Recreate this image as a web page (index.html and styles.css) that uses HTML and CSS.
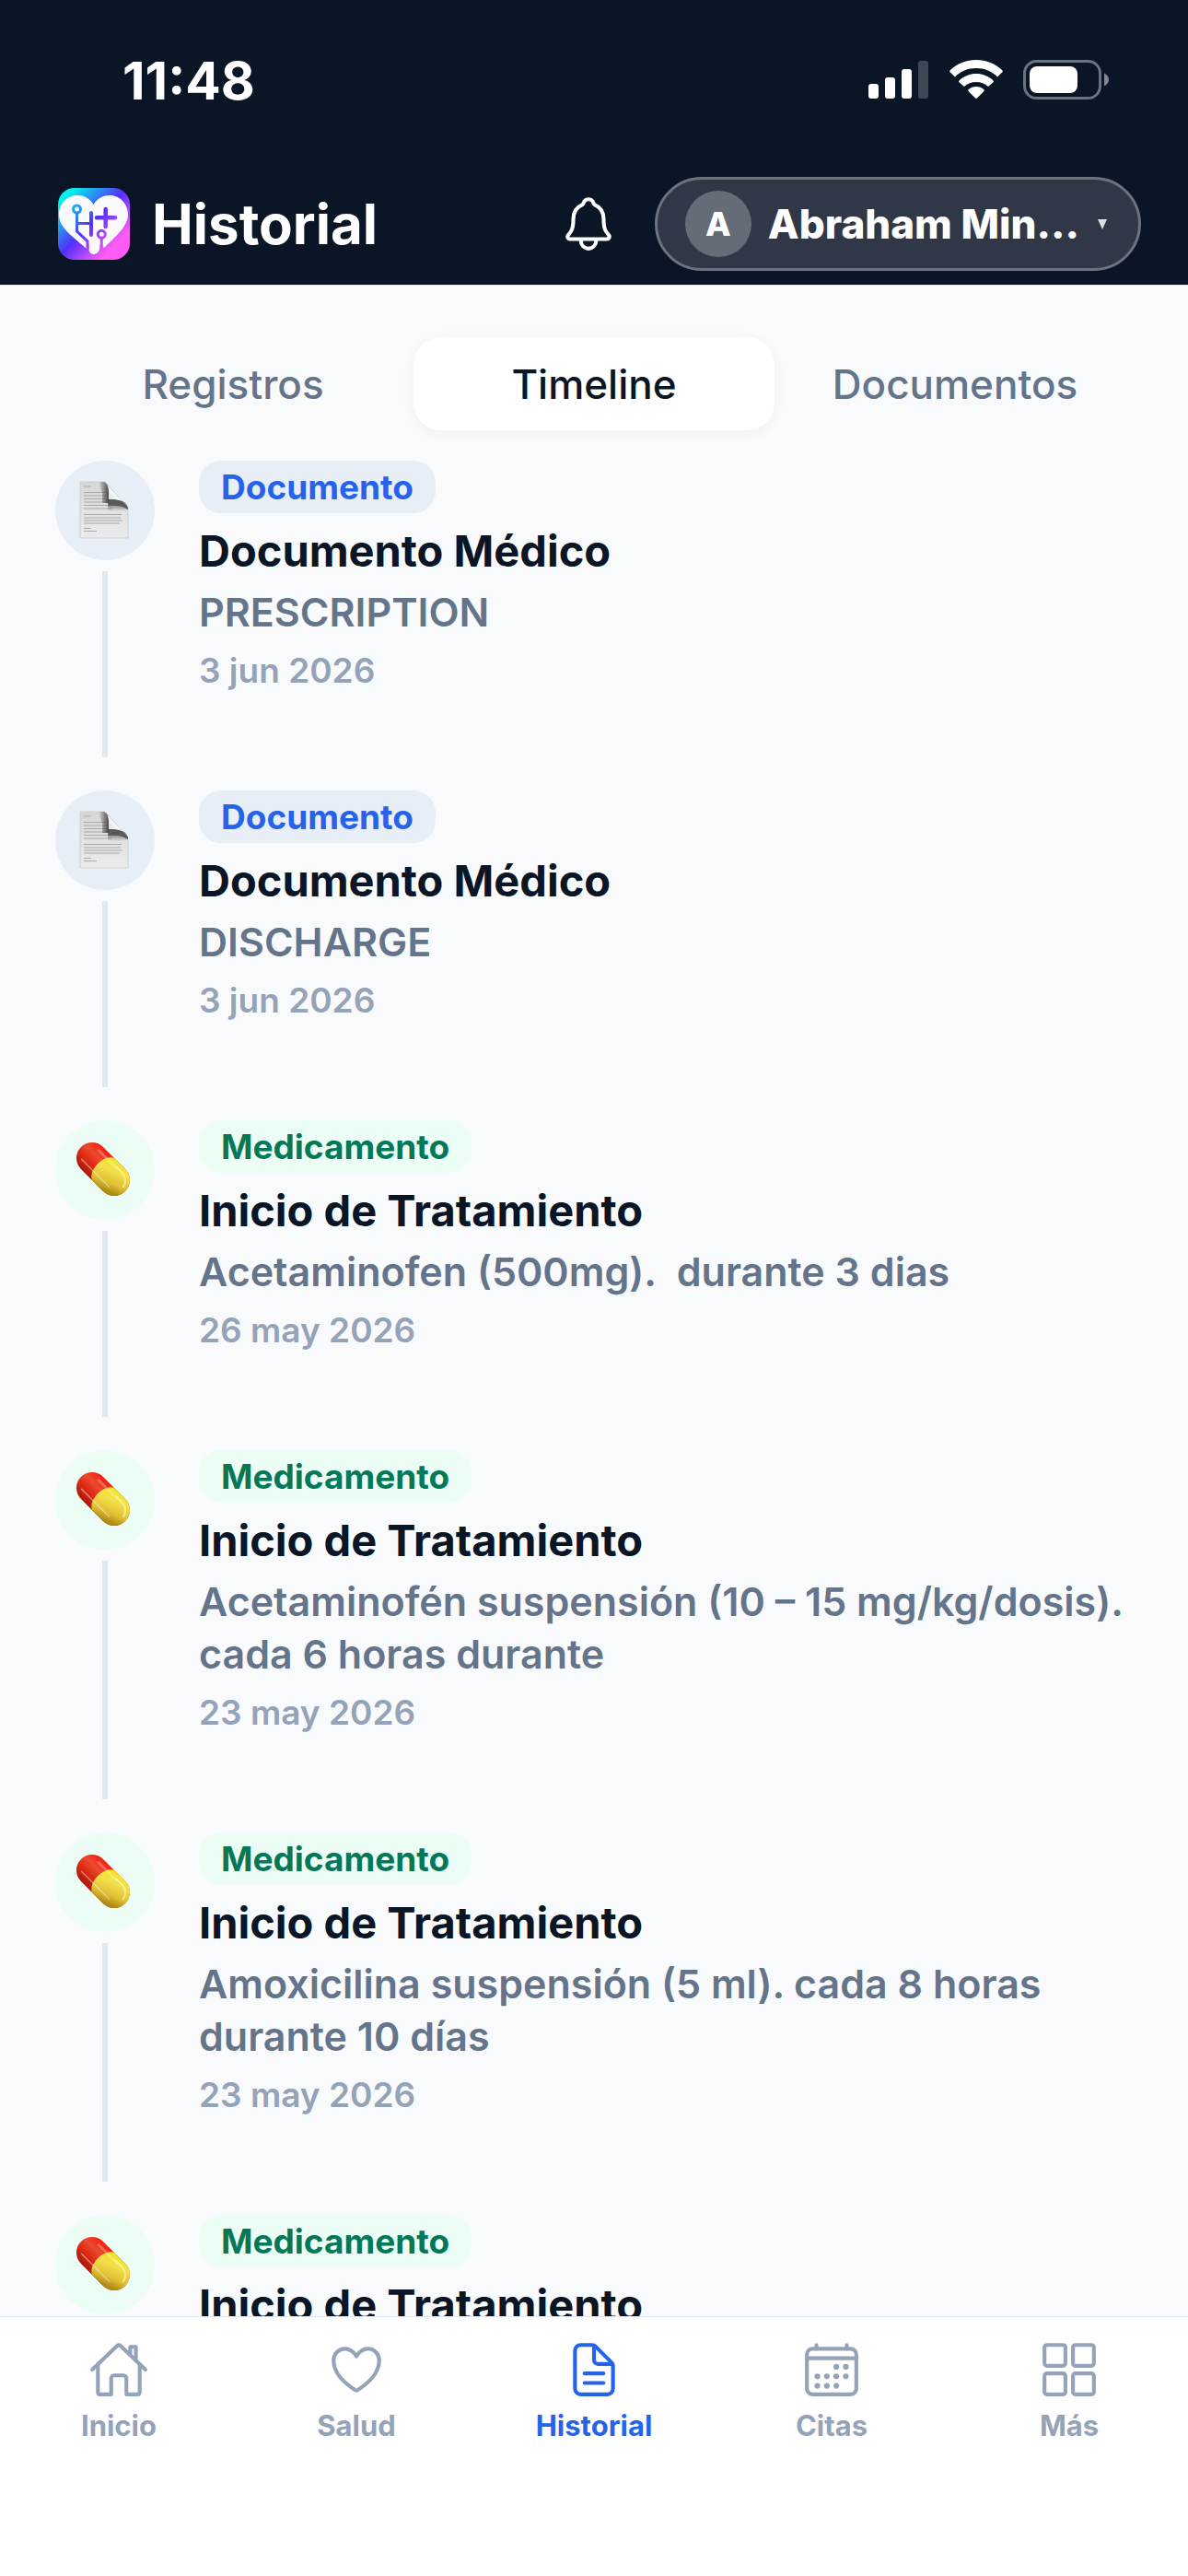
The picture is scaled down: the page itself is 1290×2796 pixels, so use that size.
FILE: index.html
```html
<!DOCTYPE html>
<html lang="es">
<head>
  <meta charset="UTF-8">
  <meta name="viewport" content="width=device-width, initial-scale=1.0">
  <title>Historial</title>
  <link rel="stylesheet" href="styles.css">
</head>
<body>
  <!-- shared icons -->
  <svg class="sprite" aria-hidden="true">
    <defs>
      <linearGradient id="pill-red" x1="0" y1="0" x2="0" y2="1">
        <stop offset="0" stop-color="#f5200c"/>
        <stop offset="0.35" stop-color="#ea4a30"/>
        <stop offset="0.65" stop-color="#dc2a12"/>
        <stop offset="1" stop-color="#a81a0c"/>
      </linearGradient>
      <linearGradient id="pill-yellow" x1="0" y1="0" x2="0.5" y2="1">
        <stop offset="0" stop-color="#f2e70e"/>
        <stop offset="0.4" stop-color="#f3e04c"/>
        <stop offset="0.75" stop-color="#e0c034"/>
        <stop offset="1" stop-color="#b08a14"/>
      </linearGradient>
      <linearGradient id="page-paper" x1="0" y1="0" x2="0" y2="1">
        <stop offset="0" stop-color="#d6d6d6"/>
        <stop offset="1" stop-color="#ececec"/>
      </linearGradient>
      <linearGradient id="page-curl" x1="0" y1="1" x2="1" y2="0">
        <stop offset="0.2" stop-color="#d4d5d6"/>
        <stop offset="0.5" stop-color="#fafbfb"/>
      </linearGradient>
      <linearGradient id="shade-down" x1="0" y1="0" x2="0" y2="1">
        <stop offset="0" stop-color="#3c3c3c"/>
        <stop offset="1" stop-color="#3c3c3c" stop-opacity="0"/>
      </linearGradient>
      <linearGradient id="shade-left" x1="1" y1="0" x2="0" y2="0">
        <stop offset="0" stop-color="#3c3c3c"/>
        <stop offset="1" stop-color="#3c3c3c" stop-opacity="0"/>
      </linearGradient>
    </defs>
    <symbol id="icon-pill" viewBox="0 0 108 108">
      <g transform="translate(52 53) rotate(45)">
        <rect x="-34" y="-17" width="68" height="34" rx="17" fill="url(#pill-red)"/>
        <path d="M0-17h17a17 17 0 0 1 0 34H0C-11 12-11-12 0-17z" fill="url(#pill-yellow)"/>
        <path d="M-18-11H10" stroke="#fff" stroke-opacity=".25" stroke-width="3" stroke-linecap="round"/>
        <path d="M-24 9H18" stroke="#fff" stroke-opacity=".4" stroke-width="1.5" stroke-linecap="round"/>
        <path d="M8-12h9a12 12 0 0 1 12 10" fill="none" stroke="#fff6a8" stroke-opacity=".7" stroke-width="2" stroke-linecap="round"/>
      </g>
    </symbol>
    <symbol id="icon-page" viewBox="0 0 108 108">
      <path d="M27 23h27L79 51v33H27z" fill="url(#page-paper)" stroke="#cfcfcf" stroke-width="1"/>
      <g stroke="#a9a9a9" stroke-width="1">
        <path d="M31 28h8M31 34.500h24M31 38h26M31 41.500h27M31 45h27M31 48.500h28M31 52h30M31 58.500h41M31 62h40M31 65h42M31 68h39M31 73.500h8M31 76.500h14"/>
      </g>
      <path d="M47 23h6c5 2 6 9 6 19v4H51V36z" fill="url(#shade-left)"/>
      <path d="M57 42c13 0 21 2 22 10v1l-4 2H57z" fill="url(#shade-down)"/>
      <path d="M53 23c6 4 5 11 5 19 12 0 18 2 21 9z" fill="url(#page-curl)"/>
      <path d="M58 42c12 0 18 2 21 9v2c-6-4-12-5-21-4z" fill="#5a5a5a"/>
    </symbol>
  </svg>

  <div class="app">
    <header class="header">
      <div class="status-bar">
        <span class="status-time">11:48</span>
        <div class="status-icons">
          <svg width="66" height="44" viewBox="0 0 66 44" fill="#fff">
            <rect x="0" y="26" width="11" height="16" rx="3"/>
            <rect x="18" y="19" width="11" height="23" rx="3"/>
            <rect x="36" y="10" width="11" height="32" rx="3"/>
            <rect x="54" y="1" width="11" height="41" rx="3" opacity=".22"/>
          </svg>
          <svg width="58" height="44" viewBox="0 0 58 44" fill="#fff">
            <path d="M29 0C40 0 50 4 57.200 11.300a1.500 1.500 0 0 1 0 2.200L52 18.500C46 12.300 38 9 29 9S12 12.300 6 18.500L.8 13.500a1.500 1.500 0 0 1 0-2.200C8 4 18 0 29 0z"/>
            <path d="M29 15c7 0 13.500 2.700 18.300 7.200a1.500 1.500 0 0 1 0 2.300L42 29c-3.600-3.200-8-5-13-5s-9.400 1.800-13 5l-5.300-4.500a1.500 1.500 0 0 1 0-2.300C15.500 17.700 22 15 29 15z"/>
            <path d="M29 29c3.200 0 6 1.100 8.200 3a1.500 1.500 0 0 1 0 2.200L30 41.600a1.500 1.500 0 0 1-2 0L20.800 34.200a1.500 1.500 0 0 1 0-2.200C23 30.100 25.800 29 29 29z"/>
          </svg>
          <svg width="94" height="44" viewBox="0 0 94 44">
            <rect x="1.500" y="1.500" width="82" height="40" rx="13" fill="none" stroke="#6c737d" stroke-width="3"/>
            <rect x="7" y="7" width="52" height="29" rx="8" fill="#fff"/>
            <path d="M88 14.500c3 1.500 5 4 5 7s-2 5.500-5 7z" fill="#84888f"/>
          </svg>
        </div>
      </div>

      <div class="title-bar">
        <svg class="logo" viewBox="0 0 78 78">
          <defs>
            <linearGradient id="brand" gradientUnits="userSpaceOnUse" x1="4" y1="4" x2="74" y2="74">
              <stop offset="0.06" stop-color="#00f6ec"/>
              <stop offset="0.48" stop-color="#5230fb"/>
              <stop offset="0.82" stop-color="#fc5cf5"/>
            </linearGradient>
          </defs>
          <rect width="78" height="78" rx="18" fill="url(#brand)"/>
          <path d="M38.500 18C34 11 28 8 21 8 9 8 1 18 1 29c0 14 15 24 30 37l2-6c1 3 0 6 1 9 2 4 7 4 10 0 2-2 1-6 2-9l4 5c11-11 26-23 26-36C76 18 68 8 56 8c-7 0-13 3-17.500 10z" fill="#fafafc"/>
          <g fill="none" stroke="url(#brand)" stroke-width="3">
            <circle cx="20.500" cy="23" r="4"/>
            <path d="M20.500 27v20L32 58v8M20.500 38.500H36"/>
            <path d="M36.010 27l-.02 24" stroke-width="4" stroke-linecap="round"/>
            <path d="M51.700 23l.01 19M42 32.300l20 .01" stroke-width="4.500" stroke-linecap="round"/>
            <circle cx="47.300" cy="50.300" r="4"/>
            <path d="M47.300 54.500l.01 11"/>
          </g>
        </svg>
        <h1 class="title">Historial</h1>
        <button class="bell" type="button" aria-label="Notificaciones">
          <svg class="icon" viewBox="0 0 512 512">
            <path d="M427.680 351.430C402 320 383.870 304 383.870 217.350 383.870 138 343.350 109.730 310 96c-4.430-1.820-8.600-6-9.950-10.550C294.200 65.540 277.800 48 256 48s-38.210 17.550-44 37.470c-1.350 4.600-5.520 8.710-9.950 10.530-33.390 13.750-73.870 41.920-73.870 121.350C128.130 304 110 320 84.320 351.430 73.680 364.450 83 384 101.610 384h308.880c18.510 0 27.770-19.610 17.190-32.570zM320 384v16a64 64 0 01-128 0v-16"/>
          </svg>
        </button>
        <button class="profile" type="button">
          <span class="avatar">A</span>
          <span class="profile-name">Abraham Min...</span>
          <svg class="caret" viewBox="0 0 10 12"><path d="M0 1h10L5 12z" fill="#dcdee1"/></svg>
        </button>
      </div>
    </header>

    <div class="tabs">
      <button class="tab" type="button">Registros</button>
      <button class="tab active" type="button">Timeline</button>
      <button class="tab" type="button">Documentos</button>
    </div>

    <main class="timeline">
      <article class="event document">
        <div class="rail">
          <svg class="marker"><use href="#icon-page"/></svg>
          <span class="line"></span>
        </div>
        <div class="event-body">
          <span class="badge">Documento</span>
          <h2>Documento Médico</h2>
          <p>PRESCRIPTION</p>
          <time>3 jun 2026</time>
        </div>
      </article>

      <article class="event document">
        <div class="rail">
          <svg class="marker"><use href="#icon-page"/></svg>
          <span class="line"></span>
        </div>
        <div class="event-body">
          <span class="badge">Documento</span>
          <h2>Documento Médico</h2>
          <p>DISCHARGE</p>
          <time>3 jun 2026</time>
        </div>
      </article>

      <article class="event medication">
        <div class="rail">
          <svg class="marker"><use href="#icon-pill"/></svg>
          <span class="line"></span>
        </div>
        <div class="event-body">
          <span class="badge">Medicamento</span>
          <h2>Inicio de Tratamiento</h2>
          <p>Acetaminofen (500mg).&nbsp; durante 3 dias</p>
          <time>26 may 2026</time>
        </div>
      </article>

      <article class="event medication">
        <div class="rail">
          <svg class="marker"><use href="#icon-pill"/></svg>
          <span class="line"></span>
        </div>
        <div class="event-body">
          <span class="badge">Medicamento</span>
          <h2>Inicio de Tratamiento</h2>
          <p>Acetaminofén suspensión (10 – 15 mg/kg/dosis). cada 6 horas durante</p>
          <time>23 may 2026</time>
        </div>
      </article>

      <article class="event medication">
        <div class="rail">
          <svg class="marker"><use href="#icon-pill"/></svg>
          <span class="line"></span>
        </div>
        <div class="event-body">
          <span class="badge">Medicamento</span>
          <h2>Inicio de Tratamiento</h2>
          <p>Amoxicilina suspensión (5 ml). cada 8 horas durante 10 días</p>
          <time>23 may 2026</time>
        </div>
      </article>

      <article class="event medication">
        <div class="rail">
          <svg class="marker"><use href="#icon-pill"/></svg>
        </div>
        <div class="event-body">
          <span class="badge">Medicamento</span>
          <h2>Inicio de Tratamiento</h2>
        </div>
      </article>
    </main>

    <nav class="bottom-nav">
      <a href="#inicio">
        <svg class="icon" viewBox="0 0 512 512">
          <path d="M80 212v236a16 16 0 0016 16h96V328a24 24 0 0124-24h80a24 24 0 0124 24v136h96a16 16 0 0016-16V212"/>
          <path d="M480 256L266.890 52c-5-5.280-16.690-5.340-21.780 0L32 256M400 179V64h-48v69"/>
        </svg>
        Inicio
      </a>
      <a href="#salud">
        <svg class="icon" viewBox="0 0 512 512">
          <path d="M352.920 80C288 80 256 144 256 144s-32-64-96.920-64c-52.760 0-94.540 44.140-95.080 96.810-1.100 109.330 86.730 187.080 183 252.420a16 16 0 0018 0c96.260-65.340 184.090-143.090 183-252.420-.54-52.670-42.320-96.810-95.080-96.810z"/>
        </svg>
        Salud
      </a>
      <a class="active" href="#historial">
        <svg class="icon" viewBox="0 0 512 512">
          <path d="M416 221.250V416a48 48 0 01-48 48H144a48 48 0 01-48-48V96a48 48 0 0148-48h98.750a32 32 0 0122.620 9.370l141.260 141.260a32 32 0 019.370 22.620z"/>
          <path d="M256 56v120a32 32 0 0032 32h120M176 288h160M176 368h160"/>
        </svg>
        Historial
      </a>
      <a href="#citas">
        <svg class="icon" viewBox="0 0 512 512">
          <rect x="48" y="80" width="416" height="384" rx="48"/>
          <path d="M128 48v32M384 48v32M464 160H48"/>
          <g fill="currentColor" stroke="none">
            <circle cx="296" cy="232" r="24"/>
            <circle cx="376" cy="232" r="24"/>
            <circle cx="136" cy="312" r="24"/>
            <circle cx="216" cy="312" r="24"/>
            <circle cx="296" cy="312" r="24"/>
            <circle cx="376" cy="312" r="24"/>
            <circle cx="136" cy="392" r="24"/>
            <circle cx="216" cy="392" r="24"/>
            <circle cx="296" cy="392" r="24"/>
          </g>
        </svg>
        Citas
      </a>
      <a href="#mas">
        <svg class="icon" viewBox="0 0 512 512">
          <rect x="48" y="48" width="176" height="176" rx="20"/>
          <rect x="288" y="48" width="176" height="176" rx="20"/>
          <rect x="48" y="288" width="176" height="176" rx="20"/>
          <rect x="288" y="288" width="176" height="176" rx="20"/>
        </svg>
        Más
      </a>
    </nav>
  </div>
</body>
</html>
```

FILE: styles.css
```css
* {
  box-sizing: border-box;
}

body {
  margin: 0;
  font-family: 'Inter', 'Liberation Sans', sans-serif;
  background-color: #f9fafc;
  color: #0a1526;
}

h1, h2, p {
  margin: 0;
}

button {
  font-family: inherit;
  border: none;
  background: none;
  padding: 0;
  cursor: pointer;
}

svg {
  display: block;
  flex-shrink: 0;
}

.sprite {
  position: absolute;
  width: 0;
  height: 0;
}

.app {
  height: 100vh;
  display: flex;
  flex-direction: column;
}

.icon {
  width: 66px;
  height: 66px;
  fill: none;
  stroke: currentColor;
  stroke-width: 32;
  stroke-linecap: round;
  stroke-linejoin: round;
}

/* header */
.header {
  background-color: #0a1526;
  color: #fff;
  border-bottom: 1px solid #e2e8f0;
}

.status-bar {
  display: flex;
  justify-content: space-between;
  align-items: center;
  height: 174px;
  padding: 0 85px 0 133px;
  margin-bottom: 18px;
}

.status-time {
  font-size: 57px;
  font-weight: 700;
}

.status-icons {
  display: flex;
  gap: 22px;
}

.title-bar {
  display: flex;
  align-items: center;
  padding: 0 51px 15px 63px;
}

.logo {
  width: 78px;
  height: 78px;
  margin-right: 24px;
}

.title {
  flex: 1;
  font-size: 60px;
  font-weight: 700;
}

.bell {
  color: #fff;
  margin-right: 39px;
}

.profile {
  display: flex;
  align-items: center;
  height: 102px;
  padding: 0 34px 0 30px;
  border: 3px solid #6c737d;
  border-radius: 51px;
  background-color: #303848;
  color: #fff;
}

.avatar {
  width: 72px;
  height: 72px;
  line-height: 72px;
  border-radius: 50%;
  background-color: #656b77;
  font-size: 36px;
  font-weight: 800;
  margin-right: 18px;
}

.profile-name {
  font-size: 44px;
  font-weight: 800;
  margin-right: 20px;
}

.caret {
  width: 10px;
  height: 12px;
}

/* tabs */
.tabs {
  display: flex;
  padding: 56px 57px 33px;
}

.tab {
  flex: 1;
  height: 101px;
  border-radius: 30px;
  color: #64748b;
  font-size: 44px;
  font-weight: 500;
}

.tab.active {
  background-color: #fff;
  color: #0a1526;
  box-shadow: 0 3px 18px rgba(10, 21, 38, 0.04);
}

/* timeline */
.timeline {
  flex: 1;
  min-height: 0;
  overflow: hidden;
  padding: 0 60px;
}

.event {
  display: flex;
  gap: 48px;
  padding-bottom: 36px;
}

.rail {
  width: 108px;
  display: flex;
  flex-direction: column;
  align-items: center;
}

.marker {
  width: 108px;
  height: 108px;
  border-radius: 50%;
}

.line {
  flex: 1;
  width: 6px;
  margin-top: 12px;
  background-color: #e2e8f0;
}

.event-body {
  flex: 1;
  display: flex;
  flex-direction: column;
  align-items: flex-start;
  padding-bottom: 72px;
}

.badge {
  padding: 6px 24px;
  border-radius: 24px;
  font-size: 37px;
  line-height: 45px;
  font-weight: 700;
}

.document .marker,
.document .badge {
  background-color: #e8eef6;
}

.document .badge {
  color: #2563eb;
}

.medication .marker,
.medication .badge {
  background-color: #ecfdf5;
}

.medication .badge {
  color: #047857;
}

.event h2 {
  margin: 12px 0 9px;
  font-size: 47px;
  line-height: 58px;
  font-weight: 700;
}

.event p {
  margin-bottom: 12px;
  color: #64748b;
  font-size: 43px;
  line-height: 57px;
  font-weight: 600;
}

.event time {
  color: #94a3b8;
  font-size: 37px;
  line-height: 45px;
  font-weight: 600;
}

/* bottom navigation */
.bottom-nav {
  display: flex;
  padding: 24px 0 145px;
  border-top: 1px solid #e2e8f0;
  background-color: #fff;
}

.bottom-nav a {
  flex: 1;
  display: flex;
  flex-direction: column;
  align-items: center;
  gap: 10px;
  color: #94a3b8;
  font-size: 31px;
  line-height: 36px;
  font-weight: 700;
  text-decoration: none;
}

.bottom-nav a.active {
  color: #2563eb;
}
```
